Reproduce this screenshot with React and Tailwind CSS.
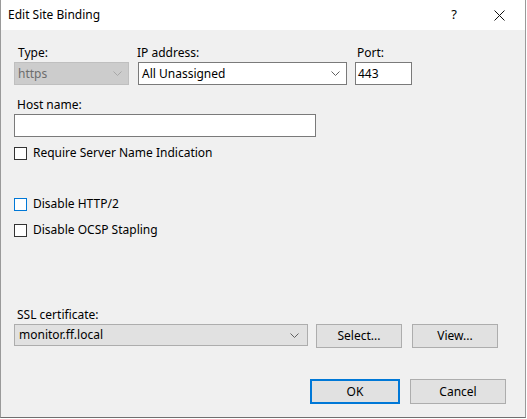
import React from "react"

function Chevron({ color = "#606060" }) {
    return (
        <svg width="9" height="5" viewBox="0 0 9 5" className="shrink-0">
            <path d="M0.5 0.5 L4.5 4.5 L8.5 0.5" fill="none" stroke={color} strokeWidth="1" />
        </svg>
    )
}

function CheckRow({ label, focus, className }) {
    return (
        <div className={"flex items-center h-[14px] ml-[13px] " + className}>
            <div className={"w-[13px] h-[13px] border bg-white " + (focus ? "border-[#0078d7]" : "border-[#333333]")}></div>
            <span className="ml-[6px] leading-[14px]">{label}</span>
        </div>
    )
}

export default function App() {
    return (
        <div className="w-[527px] h-[419px] bg-white text-[12px] text-black font-['Segoe_UI','Noto_Sans',sans-serif]">
            <div className="w-[526px] h-[418px] border-l border-r border-b border-l-[#9a9a9a] border-r-[#9a9a9a] border-b-[#6f6f6f] bg-[#f0f0f0] flex flex-col">
                {/* title bar */}
                <div className="h-[30px] bg-white flex items-center pl-[7px] pr-[20px]">
                    <span className="text-[12px]">Edit Site Binding</span>
                    <span className="ml-auto text-[13px] mr-[37px]">?</span>
                    <svg width="11" height="11" viewBox="0 0 11 11">
                        <path d="M0.5 0.5 L10.5 10.5 M10.5 0.5 L0.5 10.5" stroke="#111" strokeWidth="1" />
                    </svg>
                </div>

                {/* type / ip / port */}
                <div className="flex mt-[15px] ml-[13px]">
                    <div className="w-[115px]">
                        <div className="h-[17px] leading-[16px] pl-[4px]">Type:</div>
                        <div className="h-[23px] border border-[#bfbfbf] bg-[#cccccc] flex items-center pl-[3px] pr-[6px] text-[#6d6d6d]">
                            <span>https</span>
                            <span className="ml-auto"><Chevron color="#a8a8a8" /></span>
                        </div>
                    </div>
                    <div className="w-[209px] ml-[9px]">
                        <div className="h-[17px] leading-[16px] pl-0 -ml-[1px]">IP address:</div>
                        <div className="h-[23px] border border-[#7a7a7a] bg-white flex items-center pl-[3px] pr-[6px]">
                            <span>All Unassigned</span>
                            <span className="ml-auto"><Chevron /></span>
                        </div>
                    </div>
                    <div className="w-[57px] ml-[8px]">
                        <div className="h-[17px] leading-[16px] pl-[2px]">Port:</div>
                        <div className="h-[23px] border border-[#7a7a7a] bg-white flex items-center pl-[2px]">
                            <span>443</span>
                        </div>
                    </div>
                </div>

                {/* host name */}
                <div className="mt-[12px] ml-[13px] w-[302px]">
                    <div className="h-[17px] leading-[16px] pl-[3px]">Host name:</div>
                    <div className="h-[23px] border border-[#7a7a7a] bg-white"></div>
                </div>

                <CheckRow label="Require Server Name Indication" className="mt-[9px]" />
                <CheckRow label="Disable HTTP/2" focus className="mt-[37px]" />
                <CheckRow label="Disable OCSP Stapling" className="mt-[12px]" />

                {/* ssl certificate */}
                <div className="mt-[70px] ml-[13px] flex items-end">
                    <div className="w-[294px]">
                        <div className="h-[17px] leading-[16px] pl-[3px]">SSL certificate:</div>
                        <div className="h-[22px] border border-[#adadad] bg-[#e1e1e1] flex items-center pl-[4px] pr-[8px]">
                            <span>monitor.ff.local</span>
                            <span className="ml-auto"><Chevron /></span>
                        </div>
                    </div>
                    <button className="w-[86px] h-[24px] ml-[8px] -mb-[2px] border border-[#adadad] bg-[#e1e1e1]">Select...</button>
                    <button className="w-[86px] h-[24px] ml-[10px] -mb-[2px] border border-[#adadad] bg-[#e1e1e1]">View...</button>
                </div>

                {/* ok / cancel */}
                <div className="mt-[33px] flex ml-[309px]">
                    <button className="w-[90px] h-[25px] border-2 border-[#0078d7] bg-[#e1e1e1]">OK</button>
                    <button className="w-[96px] h-[25px] ml-[10px] border border-[#adadad] bg-[#e1e1e1]">Cancel</button>
                </div>
            </div>
        </div>
    )
}
